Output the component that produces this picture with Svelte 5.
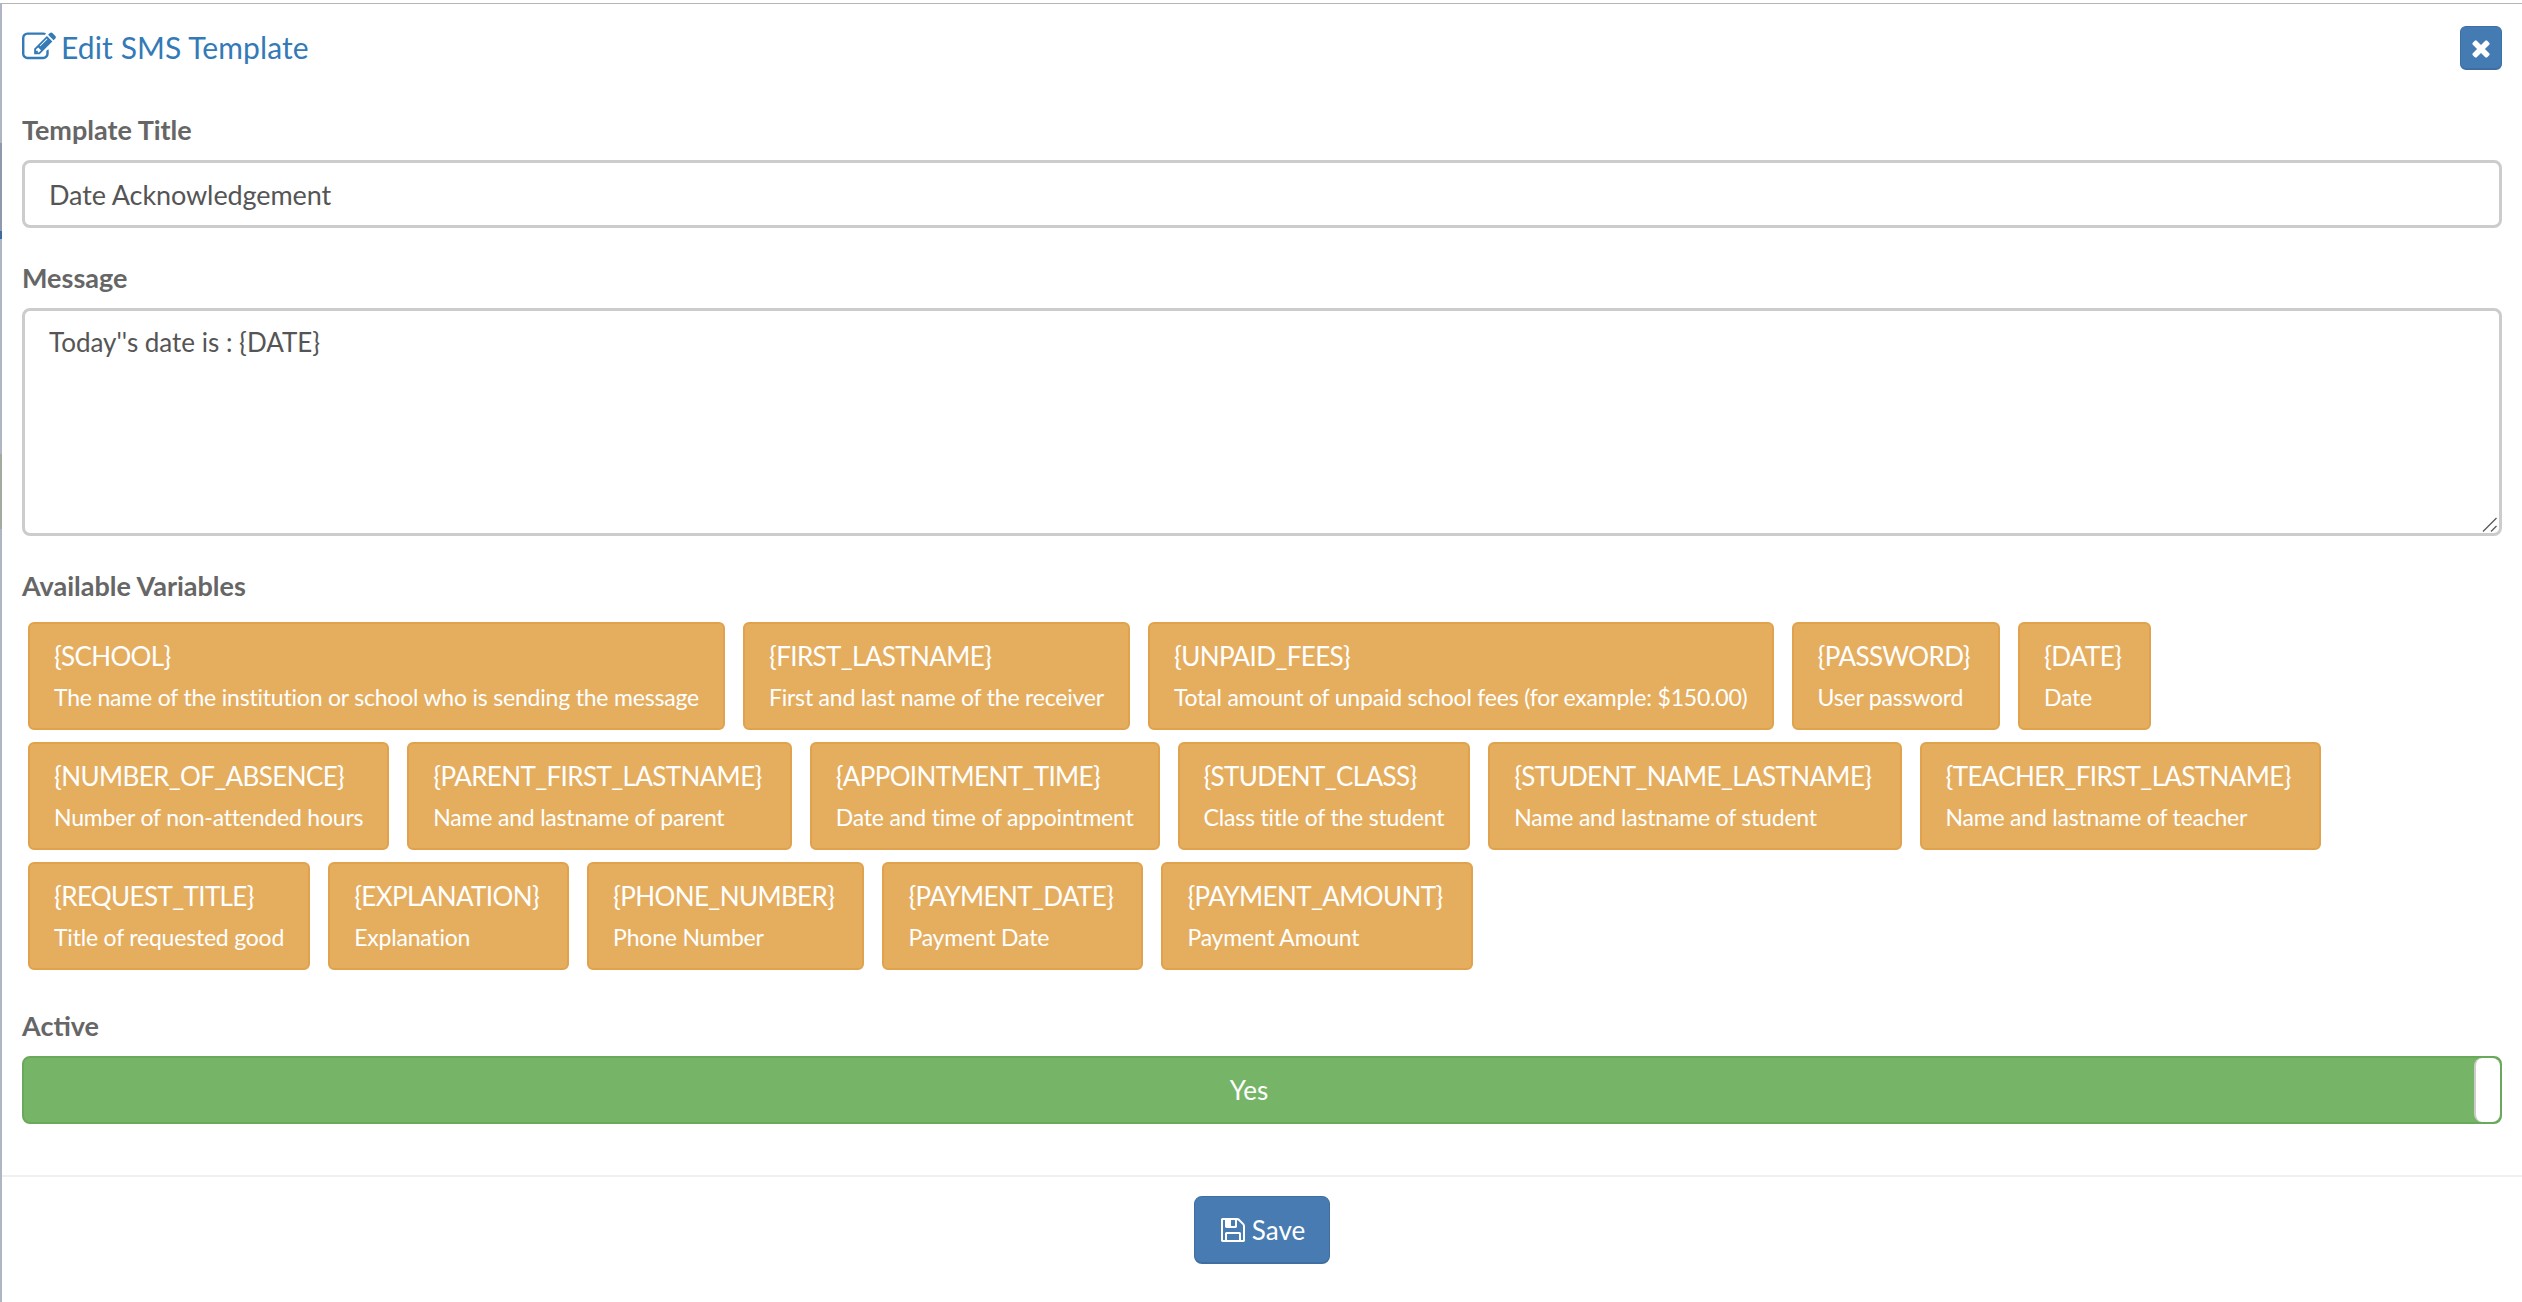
<script>
    const rows = [
        [
            { name: "{SCHOOL}", desc: "The name of the institution or school who is sending the message" },
            { name: "{FIRST_LASTNAME}", desc: "First and last name of the receiver" },
            { name: "{UNPAID_FEES}", desc: "Total amount of unpaid school fees (for example: $150.00)" },
            { name: "{PASSWORD}", desc: "User password" },
            { name: "{DATE}", desc: "Date" },
        ],
        [
            { name: "{NUMBER_OF_ABSENCE}", desc: "Number of non-attended hours" },
            { name: "{PARENT_FIRST_LASTNAME}", desc: "Name and lastname of parent" },
            { name: "{APPOINTMENT_TIME}", desc: "Date and time of appointment" },
            { name: "{STUDENT_CLASS}", desc: "Class title of the student" },
            { name: "{STUDENT_NAME_LASTNAME}", desc: "Name and lastname of student" },
            { name: "{TEACHER_FIRST_LASTNAME}", desc: "Name and lastname of teacher" },
        ],
        [
            { name: "{REQUEST_TITLE}", desc: "Title of requested good" },
            { name: "{EXPLANATION}", desc: "Explanation" },
            { name: "{PHONE_NUMBER}", desc: "Phone Number" },
            { name: "{PAYMENT_DATE}", desc: "Payment Date" },
            { name: "{PAYMENT_AMOUNT}", desc: "Payment Amount" },
        ],
    ];
</script>

<div class="page">
    <div class="modal">
        <div class="modal-header">
            <h4 class="modal-title">
                <svg class="title-icon" viewBox="0 0 1792 1792" fill="currentColor"><path d="M888 1184l116-116-152-152-116 116v56h96v96h56zm440-720q-16-16-33 1l-350 350q-17 17-1 33t33-1l350-350q17-17 1-33zm80 594v190q0 119-84.500 203.500t-203.500 84.500h-832q-119 0-203.500-84.500t-84.500-203.500v-832q0-119 84.500-203.500t203.500-84.500h832q63 0 117 25 15 7 18 23 3 17-9 29l-49 49q-14 14-32 8-23-6-45-6h-832q-66 0-113 47t-47 113v832q0 66 47 113t113 47h832q66 0 113-47t47-113v-126q0-13 9-22l64-64q15-15 35-7t20 29zm-96-738l288 288-672 672h-288v-288zm444 132l-92 92-288-288 92-92q28-28 68-28t68 28l152 152q28 28 28 68t-28 68z"/></svg>
                Edit SMS Template
            </h4>
            <button class="close-btn" aria-label="Close">
                <svg viewBox="0 0 1792 1792" fill="currentColor"><path d="M1490 1322q0 40-28 68l-136 136q-28 28-68 28t-68-28l-294-294-294 294q-28 28-68 28t-68-28l-136-136q-28-28-28-68t28-68l294-294-294-294q-28-28-28-68t28-68l136-136q28-28 68-28t68 28l294 294 294-294q28-28 68-28t68 28l136 136q28 28 28 68t-28 68l-294 294 294 294q28 28 28 68z"/></svg>
            </button>
        </div>

        <div class="modal-body">
            <label class="field-label first" for="title">Template Title</label>
            <input id="title" class="form-control" type="text" value="Date Acknowledgement" />

            <label class="field-label after-input" for="message">Message</label>
            <div class="message-wrap">
                <textarea id="message" class="form-control message">Today''s date is : &#123;DATE&#125;</textarea>
                <svg class="resize-grip" viewBox="0 0 15 15" fill="none" stroke="#555" stroke-width="1.3"><path d="M1 14.500 14.500 1"/><path d="M9 14.500 14.500 9"/></svg>
            </div>

            <div class="field-label after-message">Available Variables</div>
            <div class="variables">
                {#each rows as row}
                    <div class="var-row">
                        {#each row as v}
                            <div class="var-chip">
                                <div class="var-name">{v.name}</div>
                                <div class="var-desc">{v.desc}</div>
                            </div>
                        {/each}
                    </div>
                {/each}
            </div>

            <div class="field-label after-vars">Active</div>
            <div class="switch">
                <span class="switch-label">Yes</span>
                <span class="switch-handle"></span>
            </div>
        </div>

        <div class="modal-footer">
            <button class="save-btn">
                <svg viewBox="0 0 1792 1792" fill="currentColor"><path d="M512 1536h768v-384h-768v384zm896 0h128v-896q0-14-10-38.500t-20-34.500l-281-281q-10-10-34-20t-39-10v416q0 40-28 68t-68 28h-576q-40 0-68-28t-28-68v-416h-128v1280h128v-416q0-40 28-68t68-28h832q40 0 68 28t28 68v416zm-384-928v-320q0-13-9.500-22.500t-22.500-9.500h-192q-13 0-22.500 9.500t-9.500 22.500v320q0 13 9.500 22.500t22.500 9.500h192q13 0 22.500-9.500t9.500-22.500zm640 32v928q0 40-28 68t-68 28h-1344q-40 0-68-28t-28-68v-1344q0-40 28-68t68-28h928q40 0 88 20t76 48l280 280q28 28 48 76t20 88z"/></svg>
                Save
            </button>
        </div>
    </div>
</div>

<style>
    :global(body) {
        margin: 0;
        background: #fff;
    }

    /* the page behind the modal only shows as a thin strip on the left */
    .page {
        margin-top: 3px;
        padding-left: 2px;
        background: linear-gradient(
            to bottom,
            #aeb6c5 0,
            #aeb6c5 140px,
            #8f99ab 140px,
            #8f99ab 228px,
            #3f6c9e 228px,
            #3f6c9e 236px,
            #aeb6c5 236px,
            #aeb6c5 451px,
            #a3ab9f 451px,
            #a3ab9f 526px,
            #aeb6c5 526px
        );
    }

    .modal {
        height: 1299px;
        border-top: 1px solid #b5b5b5;
        box-sizing: border-box;
        display: flex;
        flex-direction: column;
        font-family: Lato, "Noto Sans", sans-serif;
        color: #555;
        background: #fff;
    }

    .modal-header {
        display: flex;
        align-items: center;
        justify-content: space-between;
        padding: 22px 20px 0 20px;
        height: 44px;
    }

    .modal-title {
        margin: 0 0 3px;
        display: flex;
        align-items: center;
        gap: 5px;
        font-size: 30px;
        font-weight: 400;
        letter-spacing: 0.1px;
        color: #337ab7;
    }

    .title-icon {
        width: 34px;
        height: 34px;
    }

    .close-btn {
        width: 42px;
        height: 44px;
        padding: 0;
        display: flex;
        align-items: center;
        justify-content: center;
        background: #447bb3;
        border: 1px solid #3d6fa3;
        border-bottom-width: 2px;
        border-radius: 6px;
        color: #fff;
    }

    .close-btn svg {
        width: 26px;
        height: 26px;
    }

    .modal-body {
        flex: 1;
        padding: 0 20px;
    }

    .field-label {
        display: block;
        font-size: 27px;
        font-weight: 700;
        color: #666;
        line-height: 34px;
    }

    .first {
        margin-top: 43px;
        margin-bottom: 13px;
    }

    .form-control {
        display: block;
        width: 100%;
        box-sizing: border-box;
        height: 68px;
        padding: 0 24px;
        border: 3px solid #ccc;
        border-radius: 8px;
        font-family: inherit;
        font-size: 27px;
        letter-spacing: -0.1px;
        color: #555;
        background: #fff;
        outline: none;
    }

    .after-input {
        margin-top: 33px;
        margin-bottom: 13px;
    }

    .message-wrap {
        position: relative;
    }

    .message {
        height: 228px;
        padding: 13px 24px;
        font-size: 26px;
        letter-spacing: 0;
        line-height: 36px;
        resize: none;
    }

    .resize-grip {
        position: absolute;
        right: 5px;
        bottom: 4px;
        width: 15px;
        height: 15px;
    }

    .after-message {
        margin-top: 33px;
        margin-bottom: 19px;
    }

    .variables {
        display: flex;
        flex-direction: column;
        gap: 12px;
        padding-left: 6px;
    }

    .var-row {
        display: flex;
        gap: 18px;
    }

    .var-chip {
        height: 108px;
        box-sizing: border-box;
        padding: 0 24px;
        display: flex;
        flex-direction: column;
        justify-content: center;
        background: #e5ae5f;
        border: 2px solid #e0a24c;
        border-radius: 6px;
        color: #fff;
    }

    .var-name {
        padding-right: 4px;
        font-size: 26px;
        line-height: 36px;
        letter-spacing: -0.62px;
        white-space: nowrap;
    }

    .var-desc {
        font-size: 23px;
        line-height: 36px;
        letter-spacing: -0.2px;
        margin-top: 5px;
        white-space: nowrap;
    }

    .after-vars {
        margin-top: 39px;
        margin-bottom: 13px;
    }

    .switch {
        position: relative;
        height: 68px;
        padding-right: 26px;
        display: flex;
        align-items: center;
        justify-content: center;
        box-sizing: border-box;
        background: #76b568;
        border: 2px solid #6aa85c;
        border-radius: 8px;
        color: #fff;
        font-size: 26px;
    }

    .switch-handle {
        position: absolute;
        right: 0;
        top: 0;
        bottom: 0;
        width: 26px;
        box-sizing: border-box;
        background: #fff;
        border-left: 2px solid #ccc;
        border-radius: 8px;
    }

    .modal-footer {
        height: 127px;
        box-sizing: border-box;
        border-top: 2px solid #f0f0f0;
        padding-top: 19px;
        display: flex;
        justify-content: center;
        align-items: flex-start;
    }

    .save-btn {
        height: 68px;
        width: 136px;
        padding: 0;
        display: flex;
        align-items: center;
        justify-content: center;
        gap: 5px;
        background: #477bb2;
        border: 1px solid #3f6fa1;
        border-bottom-width: 2px;
        border-radius: 8px;
        color: #fff;
        font-family: inherit;
        font-size: 26px;
    }

    .save-btn svg {
        width: 28px;
        height: 28px;
    }
</style>
